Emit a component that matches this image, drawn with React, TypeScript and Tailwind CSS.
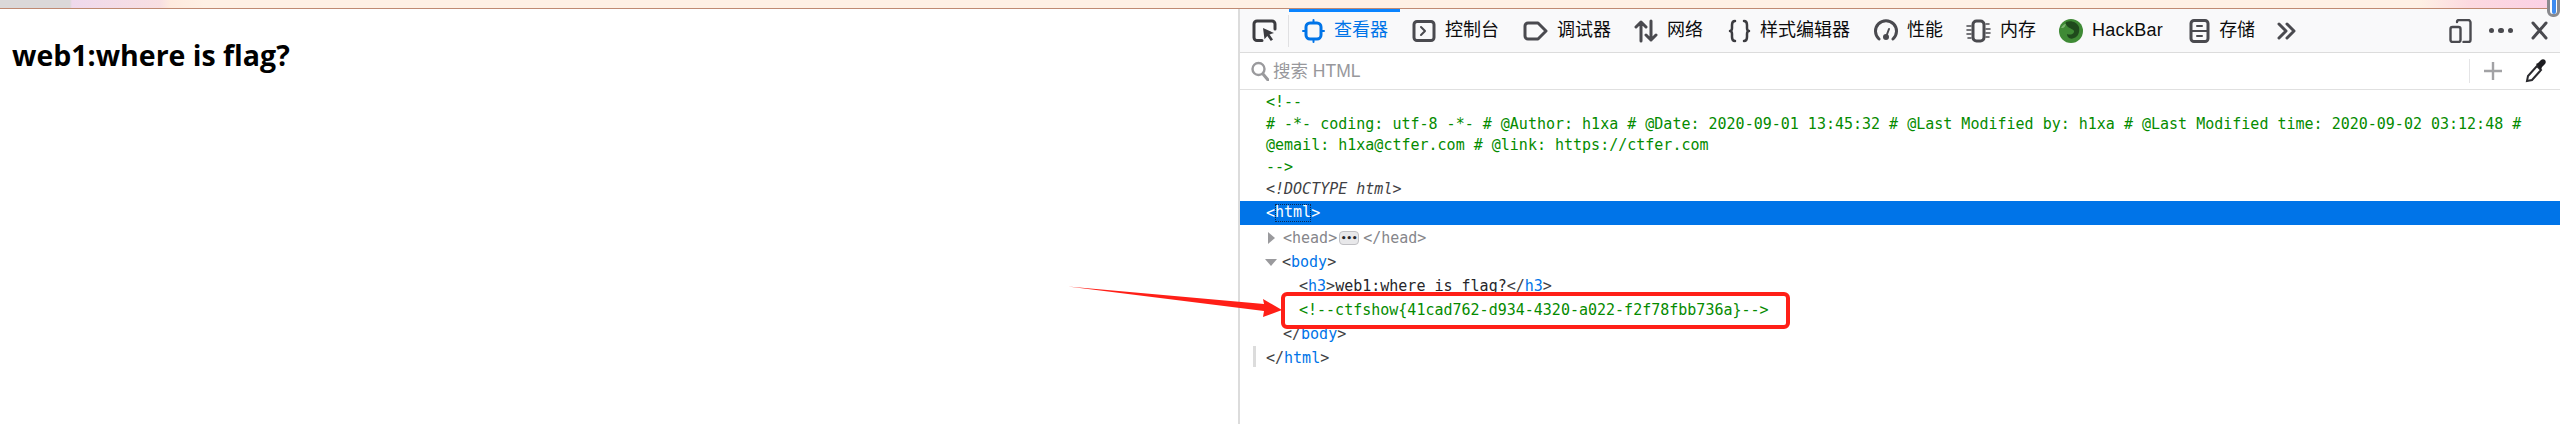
import type { ReactNode } from 'react'

const cjk = "font-['Liberation_Sans','Noto_Sans_CJK_SC',sans-serif]"

function Icon({ children, w = 24, color = '#4a4a4f' }: { children: ReactNode; w?: number; color?: string }) {
  return (
    <svg width={w} height={24} viewBox={`0 0 ${w} 24`} fill="none" stroke={color} strokeWidth={3} strokeLinecap="round" strokeLinejoin="round" className="shrink-0">
      {children}
    </svg>
  )
}

function Tab({ icon, label, className }: { icon: ReactNode; label: string; className: string }) {
  return (
    <div className={`flex items-center shrink-0 text-[18px] text-[#0c0c0d] ${className}`}>
      {icon}
      <span className="ml-[9px] whitespace-nowrap">{label}</span>
    </div>
  )
}

function Toolbar() {
  return (
    <div className={`flex items-center h-[44px] bg-[#f9f9fa] border-b border-[#dcdcdc] ${cjk}`}>
      <div className="ml-[12px] mr-[11px] flex items-center">
        <Icon w={25} color="#3c3c40">
          <path d="M10 21.5H5a3 3 0 0 1-3-3V5a3 3 0 0 1 3-3h15a3 3 0 0 1 3 3v5" />
          <path d="M11 9l11 5-4.5 1.5 3.5 5-2.2 1.5-3.5-5-2.8 3.2z" fill="#3c3c40" stroke="none" />
        </Icon>
      </div>
      <div className="w-px h-[32px] bg-[#e0e0e2]" />
      {/* Active tab */}
      <div className="relative flex items-center self-stretch w-[111px] pl-[13px] text-[18px] text-[#0074e8]">
        <div className="absolute left-0 right-0 top-0 h-[3px] bg-[#0a84ff]" />
        <Icon w={23} color="#0074e8">
          <rect x="4" y="4" width="15" height="16" rx="4" />
          <path d="M11.5 1v3M11.5 20v3M1 12h3M19 12h3" strokeWidth={2} />
        </Icon>
        <span className="ml-[9px] whitespace-nowrap">查看器</span>
      </div>
      <Tab
        className="ml-[12px]"
        label="控制台"
        icon={
          <Icon w={24}>
            <rect x="2" y="2.5" width="20" height="19" rx="3" />
            <path d="M9 8l4 4-4 4" strokeWidth={2} />
          </Icon>
        }
      />
      <Tab
        className="ml-[24px]"
        label="调试器"
        icon={
          <Icon w={25}>
            <path d="M5 4h10l8 8-8 8H5a3 3 0 0 1-3-3V7a3 3 0 0 1 3-3z" />
          </Icon>
        }
      />
      <Tab
        className="ml-[23px]"
        label="网络"
        icon={
          <Icon w={24}>
            <path d="M7 22V3M2 8l5-5 5 5M17 2v19M12 16l5 5 5-5" />
          </Icon>
        }
      />
      <Tab
        className="ml-[25px]"
        label="样式编辑器"
        icon={
          <Icon w={23} color="#3c3c40">
            <path d="M7 2c-3 0-3 2-3 4v3c0 2-1 3-2 3 1 0 2 1 2 3v3c0 2 0 4 3 4M16 2c3 0 3 2 3 4v3c0 2 1 3 2 3-1 0-2 1-2 3v3c0 2 0 4-3 4" strokeWidth={2.5} />
          </Icon>
        }
      />
      <Tab
        className="ml-[24px]"
        label="性能"
        icon={
          <Icon w={24}>
            <path d="M5 20a10.5 10.5 0 1 1 14 0" />
            <circle cx="12" cy="18" r="3" fill="#4a4a4f" stroke="none" />
            <path d="M12 18l3-8" strokeWidth={2} />
          </Icon>
        }
      />
      <Tab
        className="ml-[23px]"
        label="内存"
        icon={
          <Icon w={25}>
            <rect x="7" y="2" width="11" height="20" rx="3.5" />
            <path d="M1 7h4M1 11h4M1 15h4M2 19h3M20 5h3M20 10h4M20 14h4M20 18h3" strokeWidth={1.6} />
          </Icon>
        }
      />
      <div className="ml-[23px] flex items-center shrink-0 text-[18px] text-[#0c0c0d]">
        <svg width={24} height={24} viewBox="0 0 24 24" className="shrink-0">
          <ellipse cx="12" cy="12" rx="12" ry="12" fill="#3f8a35" />
          <path d="M7 3c5-2 11 0 13 5 1 5-1 10-5 11-4 2-7-1-7-4 2 1 6 1 7-2 1-2-3-3-6-5-2-2-3-4-2-5z" fill="#1f4a1c" />
          <path d="M2 9c1-2 3-4 5-4-1 2-1 3-3 4z" fill="#7bb36f" />
        </svg>
        <span className="ml-[9px] whitespace-nowrap tracking-[0.3px]">HackBar</span>
      </div>
      <Tab
        className="ml-[26px]"
        label="存储"
        icon={
          <Icon w={21}>
            <rect x="2" y="1.5" width="17" height="21" rx="3" />
            <path d="M2 12h17M8 7h5M8 17h5" strokeWidth={2} />
          </Icon>
        }
      />
      <div className="ml-[21px] flex items-center">
        <Icon w={21}>
          <path d="M3 5l7 7-7 7M11 5l7 7-7 7" />
        </Icon>
      </div>
      <div className="ml-auto flex items-center pr-[12px]">
        <Icon w={23}>
          <path d="M8 3a2 2 0 0 1 2-2h9a2.5 2.5 0 0 1 2.5 2.5V21a2 2 0 0 1-2 2h-5" strokeWidth={2.4} />
          <rect x="1.5" y="8" width="10" height="15" rx="2" strokeWidth={2.4} />
        </Icon>
        <div className="ml-[17px] flex gap-[4px] w-[24px]">
          <span className="size-[5.5px] rounded-full bg-[#4a4a4f]" />
          <span className="size-[5.5px] rounded-full bg-[#4a4a4f]" />
          <span className="size-[5.5px] rounded-full bg-[#4a4a4f]" />
        </div>
        <div className="ml-[18px]">
          <Icon w={17}>
            <path d="M2 4l13 15M15 4L2 19" />
          </Icon>
        </div>
      </div>
    </div>
  )
}

function SearchBar() {
  return (
    <div className={`flex items-center h-[37px] bg-white border-b border-[#e0e0e0] ${cjk}`}>
      <svg width={18} height={20} viewBox="0 0 18 20" fill="none" stroke="#9a9a9d" className="ml-[11px] shrink-0">
        <circle cx="7.5" cy="8" r="6" strokeWidth={2.4} />
        <path d="M12 13l5 6" strokeWidth={3} strokeLinecap="round" />
      </svg>
      <span className="ml-[4px] text-[17.5px] text-[#98989c]">搜索 HTML</span>
      <div className="ml-auto w-px h-[24px] bg-[#e4e4e6]" />
      <svg width={20} height={20} viewBox="0 0 20 20" stroke="#a2a2a5" strokeWidth={2.4} className="ml-[13px] shrink-0">
        <path d="M10 1v18M1 10h18" />
      </svg>
      <svg width={22} height={24} viewBox="0 0 22 24" fill="none" className="ml-[22px] mr-[13px] shrink-0">
        <path d="M12 7L3 17l-1 5 5-1L16 11z" stroke="#2a2a2e" strokeWidth={2} fill="#fff" />
        <path d="M11 5l2-1 3-3c1-1 3-1 4 0s1 3 0 4l-3 3-1 3z" fill="#1c1c20" />
      </svg>
    </div>
  )
}

const Punct = ({ children }: { children: ReactNode }) => <span className="text-[#3f3f44]">{children}</span>
const Name = ({ children }: { children: ReactNode }) => <span className="text-[#0074e8]">{children}</span>

function Markup() {
  return (
    <div className="flex-1 font-['DejaVu_Sans_Mono',monospace] text-[15px] whitespace-pre-wrap pt-[2px]">
      <div className="pl-[26px] pr-[20px] text-[#058b00] leading-[21.5px]">
        <div>{'<!--'}</div>
        <div>
          # -*- coding: utf-8 -*- # @Author: h1xa # @Date: 2020-09-01 13:45:32 # @Last Modified by: h1xa # @Last Modified time: 2020-09-02 03:12:48 # @email: h1xa@ctfer.com # @link: https://ctfer.com
        </div>
        <div>{'-->'}</div>
      </div>
      <div className="pl-[26px] h-[23px] leading-[23px] italic text-[#3f3f44]">{'<!DOCTYPE html>'}</div>
      <div className="pl-[26px] h-[24px] flex items-center mb-px bg-[#0074e8] text-white">
        <span>{'<'}</span>
        <span className="h-[18px] leading-[16px] outline outline-dotted outline-[#0b2a55] -outline-offset-1">html</span>
        <span>{'>'}</span>
      </div>
      <div className="flex items-center h-[24px] pl-[28px] text-[#86868b]">
        <span className="w-0 h-0 border-y-[6px] border-y-transparent border-l-[7px] border-l-[#9a9a9d] mr-[8px]" />
        <span>{'<head>'}</span>
        <span className="ml-[2px] mr-[4px] flex items-center justify-center w-[20px] h-[14px] rounded-[4px] border border-[#c0c0c4] bg-[#e8e8ea] text-[#26262a] text-[9px] leading-none font-bold">
          •••
        </span>
        <span>{'</head>'}</span>
      </div>
      <div className="flex items-center h-[24px] pl-[25px]">
        <span className="w-0 h-0 border-x-[6.5px] border-x-transparent border-t-[7px] border-t-[#9a9a9d] mr-[5px]" />
        <span>
          <Punct>{'<'}</Punct>
          <Name>body</Name>
          <Punct>{'>'}</Punct>
        </span>
      </div>
      <div className="h-[24px] leading-[24px] pl-[59px]">
        <Punct>{'<'}</Punct>
        <Name>h3</Name>
        <Punct>{'>'}</Punct>
        <span className="text-[#26262a]">web1:where is flag?</span>
        <Punct>{'</'}</Punct>
        <Name>h3</Name>
        <Punct>{'>'}</Punct>
      </div>
      <div className="h-[24px] leading-[24px] pl-[59px] text-[#058b00]">
        {'<!--ctfshow{41cad762-d934-4320-a022-f2f78fbb736a}-->'}
      </div>
      <div className="h-[24px] leading-[24px] pl-[43px]">
        <Punct>{'</'}</Punct>
        <Name>body</Name>
        <Punct>{'>'}</Punct>
      </div>
      <div className="flex h-[24px] leading-[24px] pl-[13px]">
        <span className="w-[3px] h-[21px] bg-[#dcdcdc] mr-[10px]" />
        <span>
          <Punct>{'</'}</Punct>
          <Name>html</Name>
          <Punct>{'>'}</Punct>
        </span>
      </div>
    </div>
  )
}

export default function App() {
  return (
    <div className="relative h-[424px] w-[2560px] overflow-hidden bg-white">
      {/* Browser chrome sliver */}
      <div className="h-[9px] border-b border-[#bf8a72] bg-[linear-gradient(90deg,#dbd8d8_0,#dbd8d8_70px,#efd9ec_72px,#f8dfe2_160px,#feeade_170px,#fef0e4_205px,#fef0e4_2420px,#fcd9e0_2470px,#fbd0e6_2560px)]" />
      <div className="flex h-[415px]">
        <div className="w-[1238px] shrink-0">
          <h3 className="ml-[12px] mt-[28px] text-[28.5px] leading-[36px] font-bold text-black font-['Open_Sans',sans-serif]">
            web1:where is flag?
          </h3>
        </div>
        <div className="flex flex-col flex-1 border-l-[2px] border-[#dcdcdc]">
          <Toolbar />
          <SearchBar />
          <Markup />
        </div>
      </div>

      {/* Red annotation */}
      <div className="absolute left-[1281px] top-[292px] w-[509px] h-[37px] rounded-[6px] border-[4px] border-[#ff1f17]" />
      <svg width={230} height={50} viewBox="0 0 230 50" className="absolute left-[1060px] top-[280px]">
        <path d="M8 6.5L204 24l-1-5 19 11-19 7 1-6z" fill="#ff1f17" />
      </svg>

      {/* Scroll thumb over the chrome */}
      <div className="absolute left-[2547px] top-[-6px] w-[13px] h-[23px] rounded-[6px] border-[3px] border-[#8a8a8e] bg-white flex justify-center">
        <span className="w-[4px] h-full rounded-full bg-[#3f8cf0]" />
      </div>
    </div>
  )
}
